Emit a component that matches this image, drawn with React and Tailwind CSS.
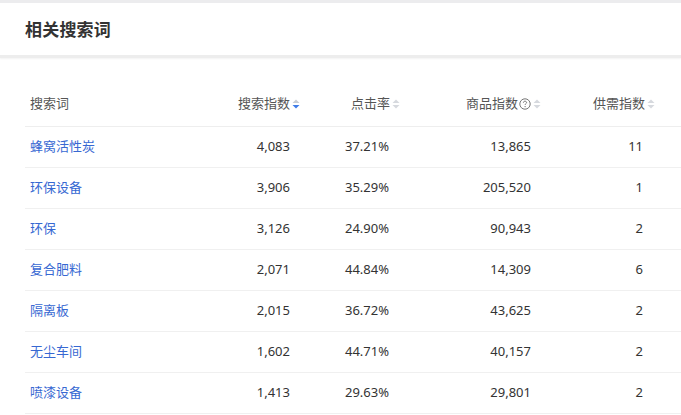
import React from "react";

const rows = [
  { word: "蜂窝活性炭", search: "4,083", ctr: "37.21%", goods: "13,865", supply: "11" },
  { word: "环保设备", search: "3,906", ctr: "35.29%", goods: "205,520", supply: "1" },
  { word: "环保", search: "3,126", ctr: "24.90%", goods: "90,943", supply: "2" },
  { word: "复合肥料", search: "2,071", ctr: "44.84%", goods: "14,309", supply: "6" },
  { word: "隔离板", search: "2,015", ctr: "36.72%", goods: "43,625", supply: "2" },
  { word: "无尘车间", search: "1,602", ctr: "44.71%", goods: "40,157", supply: "2" },
  { word: "喷漆设备", search: "1,413", ctr: "29.63%", goods: "29,801", supply: "2" },
];

function SortIcon({ active = false }) {
  return (
    <svg width="8" height="10" viewBox="0 0 8 10" className="ml-[2px] shrink-0">
      <path d="M4 0.5 L7.5 4 L0.5 4 Z" fill={active ? "#c8ccd3" : "#d6d9de"} />
      <path d="M0.5 6 L7.5 6 L4 9.5 Z" fill={active ? "#3f7ce8" : "#d6d9de"} />
    </svg>
  );
}

function HelpIcon() {
  return (
    <svg width="12" height="12" viewBox="0 0 12 12" className="ml-[1px] shrink-0">
      <circle cx="6" cy="6" r="5.2" fill="none" stroke="#666" strokeWidth="0.9" />
      <path
        d="M4.4 4.7 C4.4 3.7 5.1 3.2 6 3.2 C6.9 3.2 7.6 3.8 7.6 4.6 C7.6 5.6 6.1 5.7 6.1 6.9"
        fill="none"
        stroke="#666"
        strokeWidth="0.9"
      />
      <circle cx="6.1" cy="8.6" r="0.6" fill="#666" />
    </svg>
  );
}

export default function App() {
  return (
    <div
      className="w-[681px] h-[415px] overflow-hidden bg-white"
      style={{ fontFamily: '"Noto Sans", "Noto Sans CJK SC", sans-serif' }}
    >
      <div className="h-[3px] bg-[#ececee]" />
      <div className="h-[52px] flex items-center pl-[25px] pt-[2px]">
        <h2 className="text-[17px] font-bold text-[#333] tracking-[0.2px]">相关搜索词</h2>
      </div>
      <div className="h-[3px] bg-[#ededed] shadow-[0_1px_2px_#f3f3f3]" />

      <div className="mt-[23px] pl-[25px] text-[13px]">
        <div className="h-[46px] flex items-center border-b border-[#eeeeee] text-[#555]">
          <div className="w-[175px] pl-[5px]">搜索词</div>
          <div className="w-[100px] flex items-center justify-end">
            搜索指数
            <SortIcon active />
          </div>
          <div className="w-[140px] pl-[51px] flex items-center">
            点击率
            <SortIcon />
          </div>
          <div className="w-[101px] flex items-center justify-end">
            商品指数
            <HelpIcon />
            <SortIcon />
          </div>
          <div className="w-[115px] flex items-center justify-end pr-[1px]">
            供需指数
            <SortIcon />
          </div>
          <div className="flex-1" />
        </div>

        {rows.map((r) => (
          <div key={r.word} className="h-[41px] flex items-center border-b border-[#f0f0f0] text-[#333]">
            <div className="w-[175px] pl-[5px] text-[#3768d2]">{r.word}</div>
            <div className="w-[100px] text-right pr-[10px]">{r.search}</div>
            <div className="w-[140px] pl-[45px]">{r.ctr}</div>
            <div className="w-[101px] text-right pr-[10px]">{r.goods}</div>
            <div className="w-[115px] text-right pr-[13px]">{r.supply}</div>
            <div className="flex-1" />
          </div>
        ))}
      </div>
    </div>
  );
}
